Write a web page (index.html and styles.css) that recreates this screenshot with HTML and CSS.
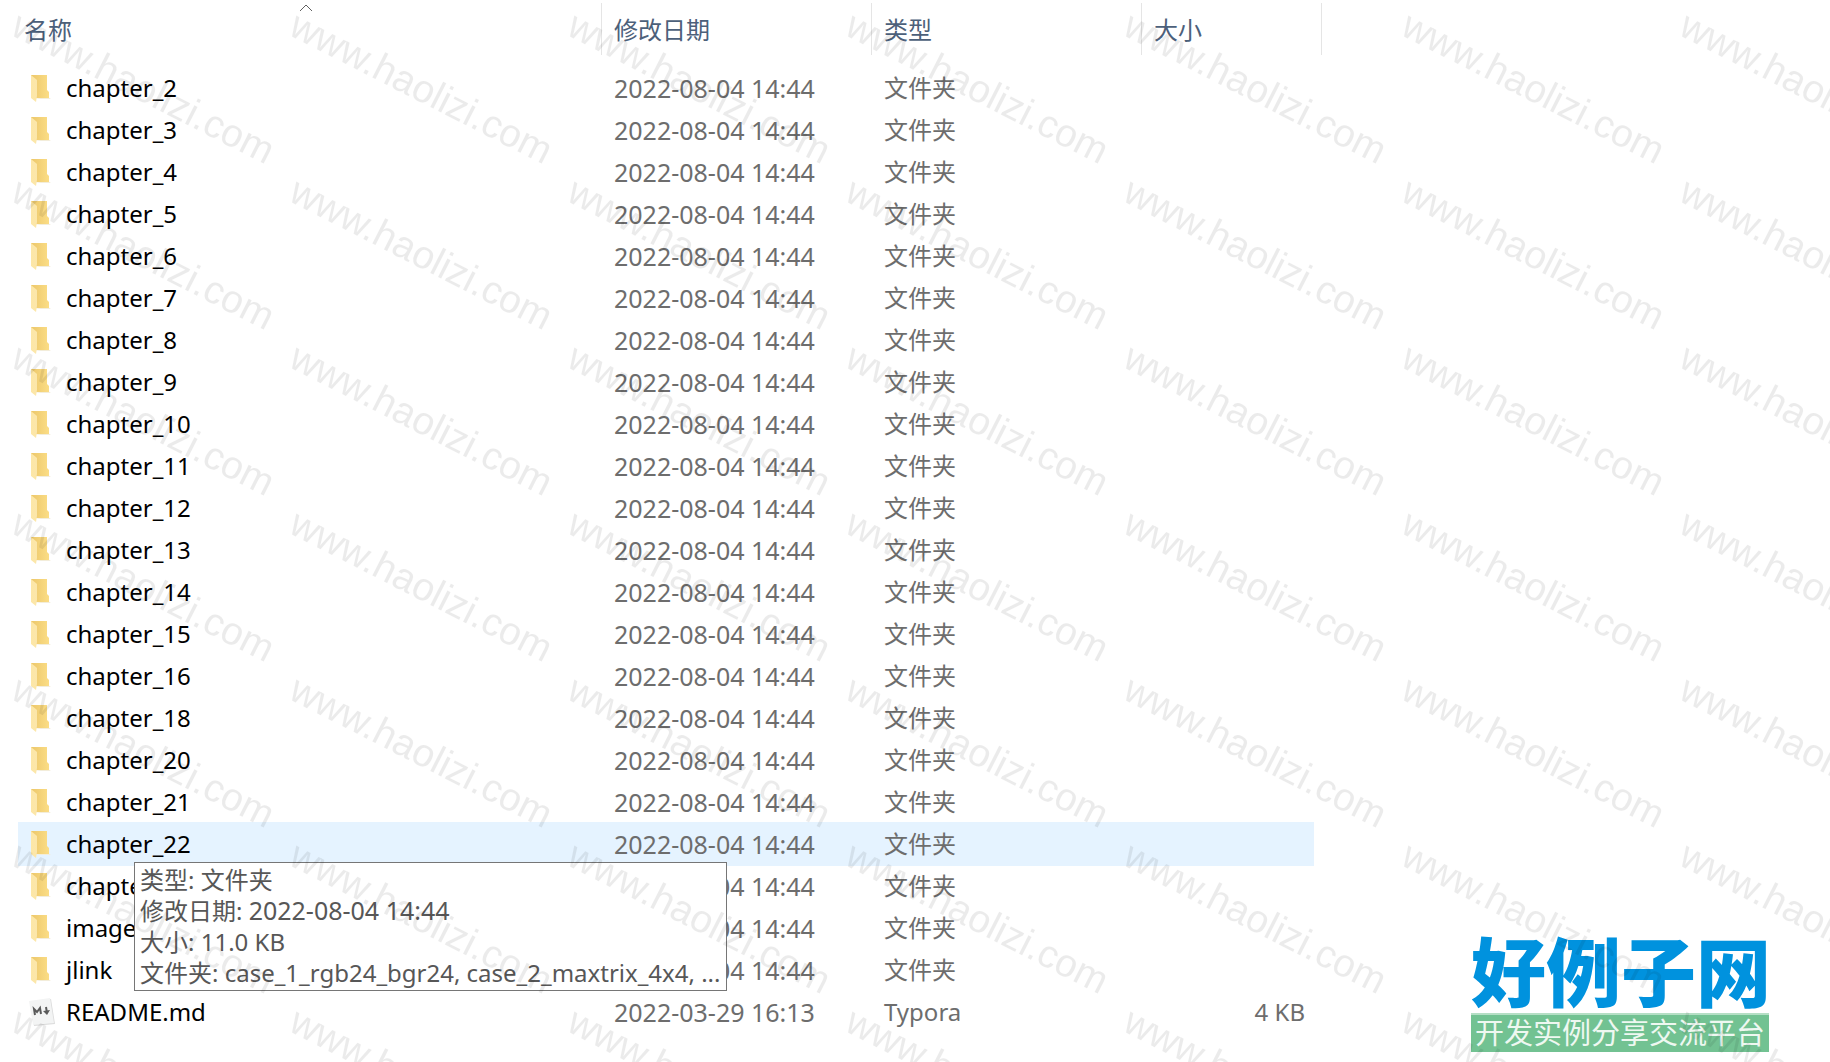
FILE: index.html
```html
<!DOCTYPE html>
<html lang="zh-CN">
<head>
<meta charset="utf-8">
<title>文件列表</title>
<link rel="stylesheet" href="styles.css">
</head>
<body>
<svg class="defs" aria-hidden="true">
  <defs>
    <linearGradient id="back" x1="0" x2="1"><stop offset="0" stop-color="#ecc76a"/><stop offset="1" stop-color="#fbdd86"/></linearGradient>
    <linearGradient id="flap" x1="0" x2="1"><stop offset="0" stop-color="#fde7a6"/><stop offset="1" stop-color="#fbe6ab"/></linearGradient>
    <symbol id="folder" viewBox="0 0 28 28">
      <path fill="#f3edda" d="M6 25l17 0-3-2z"/>
      <path fill="url(#back)" d="M3 1h16v15l2 2v6H3z"/>
      <path fill="url(#flap)" d="M3 1l6 5v16l-1 6-5-4z"/>
    </symbol>
    <symbol id="markdown" viewBox="0 0 28 28">
      <path fill="#dcdcdc" d="M3 4l20-3 4 25-21 2z"/>
      <path fill="#f3f4f4" d="M1 3l21-3 4 25-21 2z"/>
      <path fill="none" stroke="#5a5a5a" stroke-width="2" d="M7 17l-1-6 3 3 3-4 1 6M18 9l1 6"/>
      <path fill="#5a5a5a" d="M15 13l7-1-3 5z"/>
    </symbol>
  </defs>
</svg>
<main class="explorer">
<table class="files">
  <colgroup><col class="c-name"><col class="c-date"><col class="c-type"><col class="c-size"><col class="c-end"></colgroup>
  <thead>
    <tr>
      <th class="first" aria-sort="ascending"><button type="button">名称</button><svg class="caret" viewBox="0 0 14 8" aria-hidden="true"><path d="M1 7l6-6 6 6"/></svg></th>
      <th><button type="button">修改日期</button></th>
      <th><button type="button">类型</button></th>
      <th colspan="2"><button type="button">大小</button></th>
    </tr>
  </thead>
  <tbody>
    <tr><td><div class="name"><svg><use href="#folder"/></svg>chapter_2</div></td><td class="date">2022-08-04 14:44</td><td>文件夹</td><td></td><td></td></tr>
    <tr><td><div class="name"><svg><use href="#folder"/></svg>chapter_3</div></td><td class="date">2022-08-04 14:44</td><td>文件夹</td><td></td><td></td></tr>
    <tr><td><div class="name"><svg><use href="#folder"/></svg>chapter_4</div></td><td class="date">2022-08-04 14:44</td><td>文件夹</td><td></td><td></td></tr>
    <tr><td><div class="name"><svg><use href="#folder"/></svg>chapter_5</div></td><td class="date">2022-08-04 14:44</td><td>文件夹</td><td></td><td></td></tr>
    <tr><td><div class="name"><svg><use href="#folder"/></svg>chapter_6</div></td><td class="date">2022-08-04 14:44</td><td>文件夹</td><td></td><td></td></tr>
    <tr><td><div class="name"><svg><use href="#folder"/></svg>chapter_7</div></td><td class="date">2022-08-04 14:44</td><td>文件夹</td><td></td><td></td></tr>
    <tr><td><div class="name"><svg><use href="#folder"/></svg>chapter_8</div></td><td class="date">2022-08-04 14:44</td><td>文件夹</td><td></td><td></td></tr>
    <tr><td><div class="name"><svg><use href="#folder"/></svg>chapter_9</div></td><td class="date">2022-08-04 14:44</td><td>文件夹</td><td></td><td></td></tr>
    <tr><td><div class="name"><svg><use href="#folder"/></svg>chapter_10</div></td><td class="date">2022-08-04 14:44</td><td>文件夹</td><td></td><td></td></tr>
    <tr><td><div class="name"><svg><use href="#folder"/></svg>chapter_11</div></td><td class="date">2022-08-04 14:44</td><td>文件夹</td><td></td><td></td></tr>
    <tr><td><div class="name"><svg><use href="#folder"/></svg>chapter_12</div></td><td class="date">2022-08-04 14:44</td><td>文件夹</td><td></td><td></td></tr>
    <tr><td><div class="name"><svg><use href="#folder"/></svg>chapter_13</div></td><td class="date">2022-08-04 14:44</td><td>文件夹</td><td></td><td></td></tr>
    <tr><td><div class="name"><svg><use href="#folder"/></svg>chapter_14</div></td><td class="date">2022-08-04 14:44</td><td>文件夹</td><td></td><td></td></tr>
    <tr><td><div class="name"><svg><use href="#folder"/></svg>chapter_15</div></td><td class="date">2022-08-04 14:44</td><td>文件夹</td><td></td><td></td></tr>
    <tr><td><div class="name"><svg><use href="#folder"/></svg>chapter_16</div></td><td class="date">2022-08-04 14:44</td><td>文件夹</td><td></td><td></td></tr>
    <tr><td><div class="name"><svg><use href="#folder"/></svg>chapter_18</div></td><td class="date">2022-08-04 14:44</td><td>文件夹</td><td></td><td></td></tr>
    <tr><td><div class="name"><svg><use href="#folder"/></svg>chapter_20</div></td><td class="date">2022-08-04 14:44</td><td>文件夹</td><td></td><td></td></tr>
    <tr><td><div class="name"><svg><use href="#folder"/></svg>chapter_21</div></td><td class="date">2022-08-04 14:44</td><td>文件夹</td><td></td><td></td></tr>
    <tr class="hover"><td><div class="name"><svg><use href="#folder"/></svg>chapter_22
      <div class="tooltip" role="tooltip">
        <p>类型: 文件夹</p>
        <p>修改日期: <span class="stamp">2022-08-04 14:44</span></p>
        <p>大小: 11.0 KB</p>
        <p>文件夹: case_1_rgb24_bgr24, case_2_maxtrix_4x4, ...</p>
      </div></div></td><td class="date">2022-08-04 14:44</td><td>文件夹</td><td></td><td class="end"></td></tr>
    <tr><td><div class="name"><svg><use href="#folder"/></svg>chapter_23</div></td><td class="date">2022-08-04 14:44</td><td>文件夹</td><td></td><td></td></tr>
    <tr><td><div class="name"><svg><use href="#folder"/></svg>images</div></td><td class="date">2022-08-04 14:44</td><td>文件夹</td><td></td><td></td></tr>
    <tr><td><div class="name"><svg><use href="#folder"/></svg>jlink</div></td><td class="date">2022-08-04 14:44</td><td>文件夹</td><td></td><td></td></tr>
    <tr><td><div class="name"><svg><use href="#markdown"/></svg>README.md</div></td><td class="date">2022-03-29 16:13</td><td>Typora</td><td class="size">4 KB</td><td></td></tr>
  </tbody>
</table>
<div class="brand">
  <strong>好例子网</strong>
  <span>开发实例分享交流平台</span>
</div>
<svg class="watermark" aria-hidden="true">
  <defs>
    <pattern id="mark" width="278" height="166" y="8" patternUnits="userSpaceOnUse">
      <text transform="translate(9 26) rotate(27)">www.haolizi.com</text>
    </pattern>
  </defs>
  <rect width="100%" height="100%" fill="url(#mark)"/>
</svg>
</main>
</body>
</html>
```
FILE: styles.css
```css
* { box-sizing: border-box; }

body {
  margin: 0;
  background: #fff;
  color: #6d6d6d;
  font: 24px/42px "Noto Sans", "Noto Sans CJK SC", sans-serif;
}

.defs { position: absolute; width: 0; height: 0; }

.explorer {
  position: relative;
  min-height: 100vh;
  padding-left: 18px;
  overflow: hidden;
}

.files {
  width: 1304px;
  table-layout: fixed;
  border-collapse: collapse;
}
.c-name { width: 584px; }
.c-date, .c-type { width: 270px; }
.c-size { width: 172px; }
.c-end { width: 8px; }

th {
  position: relative;
  height: 67px;
  padding: 3px 0 12px;
  font-weight: 400;
  vertical-align: top;
}
th button {
  display: block;
  width: 100%;
  height: 52px;
  padding: 1px 12px 0;
  border: 0;
  border-right: 1px solid #e5e5e5;
  background: none;
  color: #4c607a;
  font: inherit;
  text-align: left;
}
th.first button { padding-left: 6px; }
.caret {
  position: absolute;
  top: 4px;
  left: 281px;
  width: 14px;
  height: 8px;
  fill: none;
  stroke: #606060;
}

td {
  height: 42px;
  padding: 0 0 0 12px;
  white-space: nowrap;
}
td:last-child { padding: 0; }
.date { font-size: 25px; }
.size { padding-right: 9px; text-align: right; }

.name {
  position: relative;
  display: flex;
  align-items: center;
  gap: 10px;
  margin-left: -2px;
  color: #000;
}
.name svg { width: 28px; height: 28px; }

.hover td:not(.end) {
  background: #e5f3ff;
  box-shadow: 0 1px #e5f3ff, 0 -1px #e5f3ff;
}

.tooltip {
  position: absolute;
  z-index: 1;
  top: 39px;
  left: 106px;
  width: 593px;
  padding: 1px 5px 2px;
  border: 1px solid #767676;
  background: #fff;
  color: #575757;
  line-height: 31px;
}
.tooltip p { margin: 0; }
.stamp { font-size: 25px; }

.brand {
  position: absolute;
  right: 61px;
  bottom: 10px;
  width: 298px;
  text-align: center;
}
.brand strong {
  display: block;
  padding-bottom: 4px;
  color: #0092de;
  font: 900 75px/80px "Noto Sans CJK SC", sans-serif;
  white-space: nowrap;
}
.brand span {
  display: block;
  padding-bottom: 4px;
  border-top: 2px solid #b5dfc5;
  background: #72c292;
  color: #eef8f1;
  font: 29px/33px "Noto Sans CJK SC", sans-serif;
  white-space: nowrap;
}

.watermark {
  position: absolute;
  z-index: 2;
  inset: 0;
  width: 100%;
  height: 100%;
  pointer-events: none;
}
.watermark text {
  fill: #000;
  fill-opacity: 0.08;
  font-family: "Liberation Sans", Arial, sans-serif;
  font-size: 39px;
}
```
